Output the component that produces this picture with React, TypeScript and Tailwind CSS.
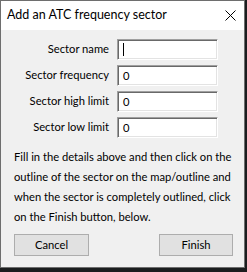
import React from 'react';

const fields = [
  { label: 'Sector name', value: '' },
  { label: 'Sector frequency', value: '0' },
  { label: 'Sector high limit', value: '0' },
  { label: 'Sector low limit', value: '0' },
];

const helpLines = [
  'Fill in the details above and then click on the',
  'outline of the sector on the map/outline and',
  'when the sector is completely outlined, click',
  'on the Finish button, below.',
];

const App: React.FC = () => {
  return (
    <div className="w-[247px] h-[272px] bg-[#1b1d1e] overflow-hidden font-['Lato','Noto_Sans',sans-serif] text-black">
      <div className="w-[245px] h-[268px] border border-[#6e6e6e] bg-[#f0f0f0] flex flex-col">
        {/* title bar */}
        <div className="h-[29px] shrink-0 bg-white flex items-center justify-between pl-[6px] pr-[8px]">
          <span className="text-[12.5px] leading-none">Add an ATC frequency sector</span>
          <svg width="11" height="11" viewBox="0 0 11 11" className="text-black">
            <path d="M0.5 0.5 L10.5 10.5 M10.5 0.5 L0.5 10.5" stroke="currentColor" strokeWidth="1" />
          </svg>
        </div>

        <div className="flex flex-col pt-[9px] pl-[12px] pr-[11px] text-[11.2px] text-black">
          <div className="flex flex-col gap-[5px]">
            {fields.map((f, i) => (
              <div key={f.label} className="h-[21px] flex items-center gap-[8px]">
                <span className="w-[96px] text-right">{f.label}</span>
                <div className="w-[101px] h-[21px] bg-white border border-[#a0a0a0] border-b-white border-r-white shadow-[inset_1px_1px_0_#696969,inset_-1px_-1px_0_#e3e3e3] leading-none pl-[5px] pt-[4px]">
                  {i === 0 ? <span className="block w-px h-[13px] bg-black -mt-px" /> : f.value}
                </div>
              </div>
            ))}
          </div>

          <div className="mt-[9px] pl-px flex flex-col">
            {helpLines.map((line) => (
              <div key={line} className="h-[20px] leading-[20px] whitespace-nowrap">
                {line}
              </div>
            ))}
          </div>

          <div className="mt-[7px] pl-px flex justify-between">
            <button className="w-[75px] h-[22px] bg-[#e1e1e1] border border-[#adadad] text-black">Cancel</button>
            <button className="w-[74px] h-[22px] bg-[#e1e1e1] border border-[#adadad] text-black">Finish</button>
          </div>
        </div>
      </div>
    </div>
  );
};

export default App;
